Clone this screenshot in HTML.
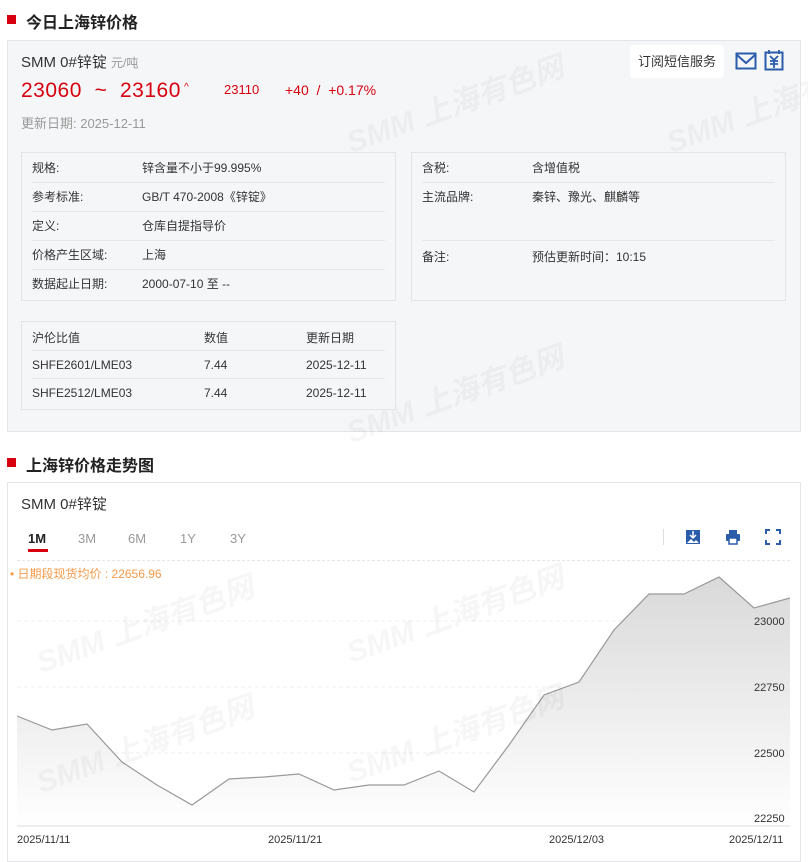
<!DOCTYPE html>
<html><head><meta charset="utf-8"><style>
*{margin:0;padding:0;box-sizing:border-box}
body{width:808px;height:852px;background:#fff;font-family:"Liberation Sans","Noto Sans CJK SC",sans-serif;color:#333;position:relative;overflow:hidden}
.abs{position:absolute}
.h{font-size:16px;font-weight:bold;color:#222}
.sq{width:9px;height:9px;background:#d7000f}
.panel{left:7px;top:40px;width:794px;height:392px;background:#f5f6f8;border:1px solid #e3e5e8}
.box{border:1px solid #e2e4e8;background:#f5f6f8}
.row{position:absolute;left:10px;right:10px;height:29px;font-size:12px;line-height:29px;border-bottom:1px solid #e6e7ea;color:#333}
.row .v{position:absolute;left:110px}
.wm{color:rgba(0,0,0,0.035);font-weight:bold;font-style:italic;font-size:30px;transform:rotate(-20deg);white-space:nowrap}
.t{font-size:12px;color:#999}
</style></head><body>
<div class="abs sq" style="left:7px;top:15px"></div>
<div class="abs h" style="left:26px;top:9px">今日上海锌价格</div>
<div class="abs panel"></div>
<div class="abs wm" style="left:340px;top:80px">SMM 上海有色网</div>
<div class="abs wm" style="left:660px;top:80px">SMM 上海有色网</div>
<div class="abs wm" style="left:340px;top:370px">SMM 上海有色网</div>
<div class="abs" style="left:21px;top:51px;font-size:15px;color:#333">SMM 0#锌锭 <span style="font-size:12px;color:#999">元/吨</span></div>
<div class="abs" style="left:21px;top:79px;font-size:21px;color:#d7000f;white-space:pre;letter-spacing:0.5px">23060  ~  23160</div>
<div class="abs" style="left:184px;top:82px;font-size:10px;color:#d7000f">^</div>
<div class="abs" style="left:224px;top:82px;font-size:13px;color:#d7000f">23110</div>
<div class="abs" style="left:285px;top:82px;font-size:14px;color:#d7000f;white-space:pre">+40  /  +0.17%</div>
<div class="abs" style="left:21px;top:113px;font-size:13px;color:#999">更新日期: 2025-12-11</div>
<div class="abs" style="left:630px;top:45px;width:94px;height:33px;background:#fff;border-radius:3px;font-size:13px;line-height:33px;text-align:center;color:#333">订阅短信服务</div>
<svg class="abs" style="left:735px;top:51px" width="22" height="20"><rect x="1.5" y="2.5" width="19" height="15" fill="none" stroke="#2a5caa" stroke-width="2"/><path d="M2 4l9 8 9-8" fill="none" stroke="#2a5caa" stroke-width="2"/></svg>
<svg class="abs" style="left:764px;top:49px" width="20" height="22"><rect x="1.5" y="3.5" width="17" height="17" fill="none" stroke="#2a5caa" stroke-width="2"/><path d="M5 1v4M15 1v4M6 7l4 4 4-4M10 11v8M6 12h8M6 15h8" fill="none" stroke="#2a5caa" stroke-width="1.8"/></svg>

<div class="abs box" style="left:21px;top:152px;width:375px;height:149px">
<div class="row" style="top:1px">规格:<span class="v">锌含量不小于99.995%</span></div>
<div class="row" style="top:30px">参考标准:<span class="v">GB/T 470-2008《锌锭》</span></div>
<div class="row" style="top:59px">定义:<span class="v">仓库自提指导价</span></div>
<div class="row" style="top:88px">价格产生区域:<span class="v">上海</span></div>
<div class="row" style="top:117px;border:none">数据起止日期:<span class="v">2000-07-10 至 --</span></div>
</div>
<div class="abs box" style="left:411px;top:152px;width:375px;height:149px">
<div class="row" style="top:1px">含税:<span class="v">含增值税</span></div>
<div class="row" style="top:30px;height:58px">主流品牌:<span class="v">秦锌、豫光、麒麟等</span></div>
<div class="row" style="top:90px;border:none">备注:<span class="v">预估更新时间：10:15</span></div>
</div>
<div class="abs box" style="left:21px;top:321px;width:375px;height:89px">
<div class="row" style="top:4px;height:25px;line-height:25px">沪伦比值<span class="v" style="left:172px">数值</span><span class="v" style="left:274px">更新日期</span></div>
<div class="row" style="top:29px;height:28px;line-height:28px">SHFE2601/LME03<span class="v" style="left:172px">7.44</span><span class="v" style="left:274px">2025-12-11</span></div>
<div class="row" style="top:57px;height:28px;line-height:28px;border:none">SHFE2512/LME03<span class="v" style="left:172px">7.44</span><span class="v" style="left:274px">2025-12-11</span></div>
</div>

<div class="abs sq" style="left:7px;top:458px"></div>
<div class="abs h" style="left:26px;top:452px">上海锌价格走势图</div>
<div class="abs" style="left:7px;top:482px;width:794px;height:380px;border:1px solid #e3e5e8"></div>
<div class="abs" style="left:21px;top:493px;font-size:15px;color:#333">SMM 0#锌锭</div>
<div class="abs" style="left:28px;top:531px;font-size:13px;font-weight:bold;color:#222">1M</div>
<div class="abs" style="left:28px;top:549px;width:20px;height:3px;background:#d7000f"></div>
<div class="abs t" style="left:78px;top:531px;font-size:13px">3M</div>
<div class="abs t" style="left:128px;top:531px;font-size:13px">6M</div>
<div class="abs t" style="left:180px;top:531px;font-size:13px">1Y</div>
<div class="abs t" style="left:230px;top:531px;font-size:13px">3Y</div>
<div class="abs" style="left:663px;top:529px;width:1px;height:16px;background:#ddd"></div>
<svg class="abs" style="left:685px;top:529px" width="16" height="16"><rect x="1" y="1" width="14" height="14" fill="#2a5caa"/><path d="M8 2v6M5 6l3 3 3-3" stroke="#fff" stroke-width="1.5" fill="none"/><path d="M2 14l4-4 3 3 2-2 3 3z" fill="#fff"/></svg>
<svg class="abs" style="left:725px;top:529px" width="16" height="16"><rect x="4" y="1" width="8" height="4" fill="#2a5caa"/><rect x="1" y="5" width="14" height="7" rx="1" fill="#2a5caa"/><rect x="4" y="9" width="8" height="6" fill="#fff" stroke="#2a5caa" stroke-width="1.5"/></svg>
<svg class="abs" style="left:765px;top:529px" width="16" height="16" fill="none" stroke="#2a5caa" stroke-width="2"><path d="M1 5V1h4M11 1h4v4M15 11v4h-4M5 15H1v-4"/></svg>
<div class="abs" style="left:17px;top:560px;width:773px;border-top:1px dashed #e5e5e5"></div>
<div class="abs" style="left:10px;top:565px;font-size:12px;color:#f59a4a">• 日期段现货均价 : 22656.96</div>
<svg class="abs" style="left:0;top:550px" width="808" height="302">
<g stroke="#eee" stroke-dasharray="4 3"><line x1="17" x2="790" y1="71" y2="71"/><line x1="17" x2="790" y1="137" y2="137"/><line x1="17" x2="790" y1="203" y2="203"/><line x1="17" x2="790" y1="268" y2="268"/></g>
<defs><linearGradient id="g" x1="0" y1="0" x2="0" y2="1"><stop offset="0" stop-color="#d9d9d9"/><stop offset="1" stop-color="#fff"/></linearGradient></defs>
<path d="M17 166L52 180 87 174 122 212 157 235 192 255 229 229 264 227 299 224 334 240 369 235 404 235 439 221 474 242 509 195 544 145 579 132 614 80 649 44 684 44 719 27 754 58 790 48V276H17Z" fill="url(#g)"/>
<path d="M17 166L52 180 87 174 122 212 157 235 192 255 229 229 264 227 299 224 334 240 369 235 404 235 439 221 474 242 509 195 544 145 579 132 614 80 649 44 684 44 719 27 754 58 790 48" fill="none" stroke="#999" stroke-width="1.2"/>
<line x1="17" x2="790" y1="276" y2="276" stroke="#ddd"/>
<g font-size="11" fill="#333" font-family="Liberation Sans"><text x="754" y="75">23000</text><text x="754" y="141">22750</text><text x="754" y="207">22500</text><text x="754" y="272">22250</text>
<text x="17" y="293">2025/11/11</text><text x="268" y="293">2025/11/21</text><text x="549" y="293">2025/12/03</text><text x="729" y="293">2025/12/11</text></g>
</svg>
<div class="abs wm" style="left:30px;top:600px">SMM 上海有色网</div>
<div class="abs wm" style="left:340px;top:590px">SMM 上海有色网</div>
<div class="abs wm" style="left:30px;top:720px">SMM 上海有色网</div>
<div class="abs wm" style="left:340px;top:710px">SMM 上海有色网</div>
</body></html>
